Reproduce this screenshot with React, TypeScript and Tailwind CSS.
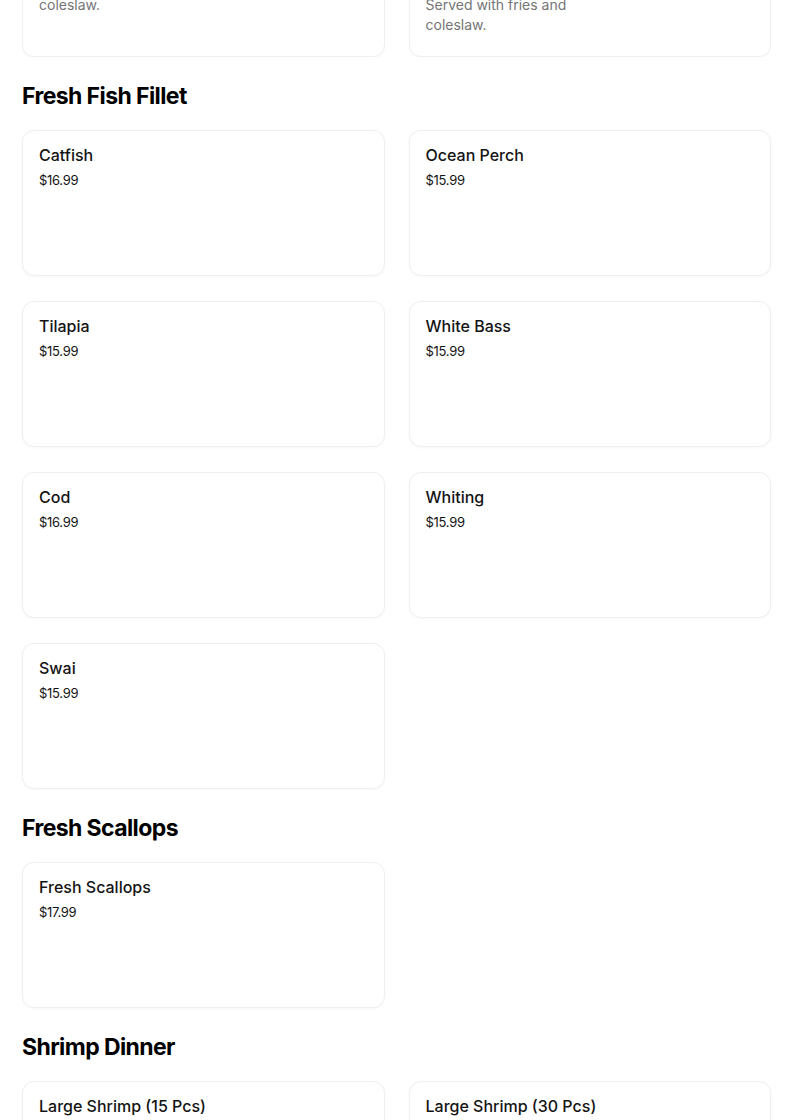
import React from "react";

type Item = { name: string; price: string };

const font = { fontFamily: "Inter, 'Noto Sans', 'Liberation Sans', sans-serif" };

function Card({ item }: { item: Item }) {
  return (
    <div className="h-[146px] rounded-xl border border-[#efefef] bg-white px-4 pt-[12px] shadow-[0_1px_3px_rgba(0,0,0,0.03)]">
      <div className="text-[16px] font-medium leading-6 text-[#141414]">{item.name}</div>
      <div className="mt-[3px] text-[13px] leading-5 tracking-[-0.3px] text-[#141414]">{item.price}</div>
    </div>
  );
}

function Section({ title, items }: { title: string; items: Item[] }) {
  return (
    <section>
      <h2 className="mt-[23px] mb-[18px] text-[23px] font-bold leading-8 tracking-[-0.6px] text-black">{title}</h2>
      <div className="grid grid-cols-2 gap-x-6 gap-y-[25px]">
        {items.map((it) => (
          <Card key={it.name} item={it} />
        ))}
      </div>
    </section>
  );
}

export default function App() {
  return (
    <div className="min-h-screen bg-white" style={font}>
      <div className="w-[793px] pl-[22px] pr-[22px]">
        <div className="flex h-[57px] flex-col justify-end overflow-hidden">
          <div className="grid grid-cols-2 items-stretch gap-x-6">
            <div className="rounded-xl border border-[#efefef] bg-white px-4 pt-4 pb-[21px] shadow-[0_1px_3px_rgba(0,0,0,0.03)]">
              <div className="text-[16px] font-medium leading-6 text-[#141414]">Fish &amp; Chips</div>
              <div className="text-[13px] leading-5 text-[#141414]">$14.99</div>
              <div className="max-w-[190px] text-[14px] leading-5 text-[#757575]">
                Two pieces of fish fillet.
                <br />
                Served with fries and
                <br />
                coleslaw.
              </div>
            </div>
            <div className="rounded-xl border border-[#efefef] bg-white px-4 pt-4 pb-[21px] shadow-[0_1px_3px_rgba(0,0,0,0.03)]">
              <div className="text-[16px] font-medium leading-6 text-[#141414]">Shrimp &amp; Chips</div>
              <div className="text-[13px] leading-5 text-[#141414]">$15.99</div>
              <div className="max-w-[190px] text-[14px] leading-5 text-[#757575]">
                Ten pieces of fried
                <br />
                jumbo shrimp.
                <br />
                Served with fries and
                <br />
                coleslaw.
              </div>
            </div>
          </div>
        </div>
        <Section
          title="Fresh Fish Fillet"
          items={[
            { name: "Catfish", price: "$16.99" },
            { name: "Ocean Perch", price: "$15.99" },
            { name: "Tilapia", price: "$15.99" },
            { name: "White Bass", price: "$15.99" },
            { name: "Cod", price: "$16.99" },
            { name: "Whiting", price: "$15.99" },
            { name: "Swai", price: "$15.99" },
          ]}
        />
        <Section title="Fresh Scallops" items={[{ name: "Fresh Scallops", price: "$17.99" }]} />
        <Section
          title="Shrimp Dinner"
          items={[
            { name: "Large Shrimp (15 Pcs)", price: "$24.99" },
            { name: "Large Shrimp (30 Pcs)", price: "$44.99" },
          ]}
        />
      </div>
    </div>
  );
}
